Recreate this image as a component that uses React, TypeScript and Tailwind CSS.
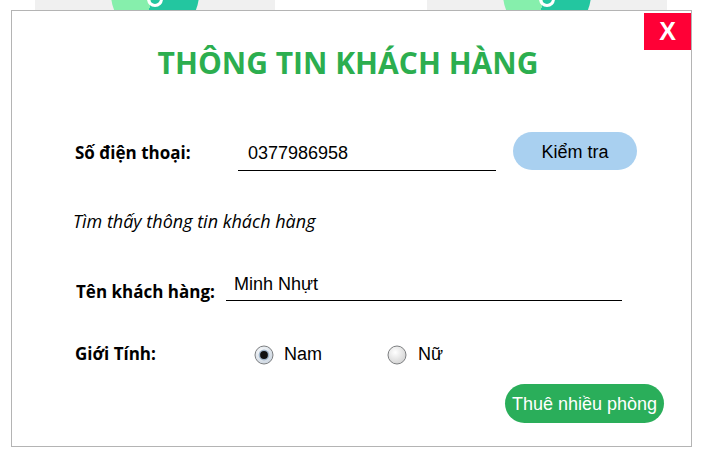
import React from "react";

function Radio({ checked }: { checked: boolean }) {
  return (
    <svg width="20" height="20" viewBox="0 0 20 20" className="block">
      <defs>
        <radialGradient id={checked ? "rgc" : "rgu"} cx="0.4" cy="0.35" r="0.7">
          <stop offset="0" stopColor="#ffffff" />
          <stop offset="1" stopColor={checked ? "#c9d3de" : "#d2d2d2"} />
        </radialGradient>
      </defs>
      <circle cx="10" cy="10" r="9" fill={`url(#${checked ? "rgc" : "rgu"})`} stroke="#7d7f81" strokeWidth="1" />
      {checked && (
        <>
          <circle cx="10" cy="10" r="5.4" fill="#9fb4c9" />
          <circle cx="10" cy="10" r="3.9" fill="#111" />
        </>
      )}
    </svg>
  );
}

function Card() {
  return (
    <div className="relative w-[240px] h-[300px] bg-[#f0f0f0] overflow-hidden shrink-0">
      <div className="absolute left-[76px] top-[-50px] w-[88px] h-[88px] rounded-full bg-[linear-gradient(100deg,#86efac_47%,#23c6a0_47%)]" />
      <div className="absolute left-[112px] top-[-9px] w-[16px] h-[16px] rounded-full border-[3px] border-white" />
    </div>
  );
}

export default function App() {
  const sans = "font-['Open_Sans',sans-serif]";
  const arial = "font-['Liberation_Sans',Arial,sans-serif]";
  return (
    <div className="relative w-[702px] h-[457px] overflow-hidden bg-white">
      <div className="flex pl-[35px] gap-[152px]">
        <Card />
        <Card />
      </div>

      <div className="absolute left-[11px] top-[10px] w-[681px] h-[437px] border border-[#b4b4b4] bg-white flex flex-col">
        <button className={`absolute top-[2px] right-0 w-[47px] h-[37px] bg-[#ff0036] text-white text-[25px] leading-none font-bold flex items-center justify-center ${arial}`}>
          X
        </button>

        <h1 className={`mt-[37px] pr-[7px] text-center text-[30px] leading-none font-bold text-[#2cae4f] ${sans}`}>
          THÔNG TIN KHÁCH HÀNG
        </h1>

        <div className="mt-[54px] flex items-start pl-[63px]">
          <div className={`w-[163px] mt-[12px] text-[17px] leading-none font-bold text-black ${sans}`}>Số điện thoại:</div>
          <div className={`w-[258px] mt-[12px] pl-[10px] pb-[8px] border-b border-black text-[18px] leading-none text-black ${arial}`}>
            0377986958
          </div>
          <button className={`ml-[17px] w-[124px] h-[38px] rounded-full bg-[#a9d0f0] pt-[2px] text-[18px] leading-none text-black ${arial}`}>
            Kiểm tra
          </button>
        </div>

        <div className={`mt-[41px] pl-[61px] text-[18px] leading-none italic text-black ${sans}`}>
          Tìm thấy thông tin khách hàng
        </div>

        <div className="mt-[45px] flex items-start pl-[64px]">
          <div className={`w-[150px] mt-[8px] text-[17px] leading-none font-bold text-black ${sans}`}>Tên khách hàng:</div>
          <div className={`w-[396px] pl-[8px] pb-[7px] border-b border-black text-[18px] leading-none text-black ${arial}`}>
            Minh Nhựt
          </div>
        </div>

        <div className="mt-[44px] flex items-start pl-[63px]">
          <div className={`w-[179px] text-[17px] leading-none font-bold text-black ${sans}`}>Giới Tính:</div>
          <Radio checked />
          <div className={`ml-[10px] w-[103px] text-[18px] leading-none text-black ${arial}`}>Nam</div>
          <Radio checked={false} />
          <div className={`ml-[11px] text-[18px] leading-none text-black ${arial}`}>Nữ</div>
        </div>

        <div className="mt-[19px] flex justify-end pr-[27px]">
          <button className={`w-[159px] h-[39px] rounded-full bg-[#2aae5a] text-white text-[18px] leading-none ${arial}`}>
            Thuê nhiều phòng
          </button>
        </div>
      </div>
    </div>
  );
}
